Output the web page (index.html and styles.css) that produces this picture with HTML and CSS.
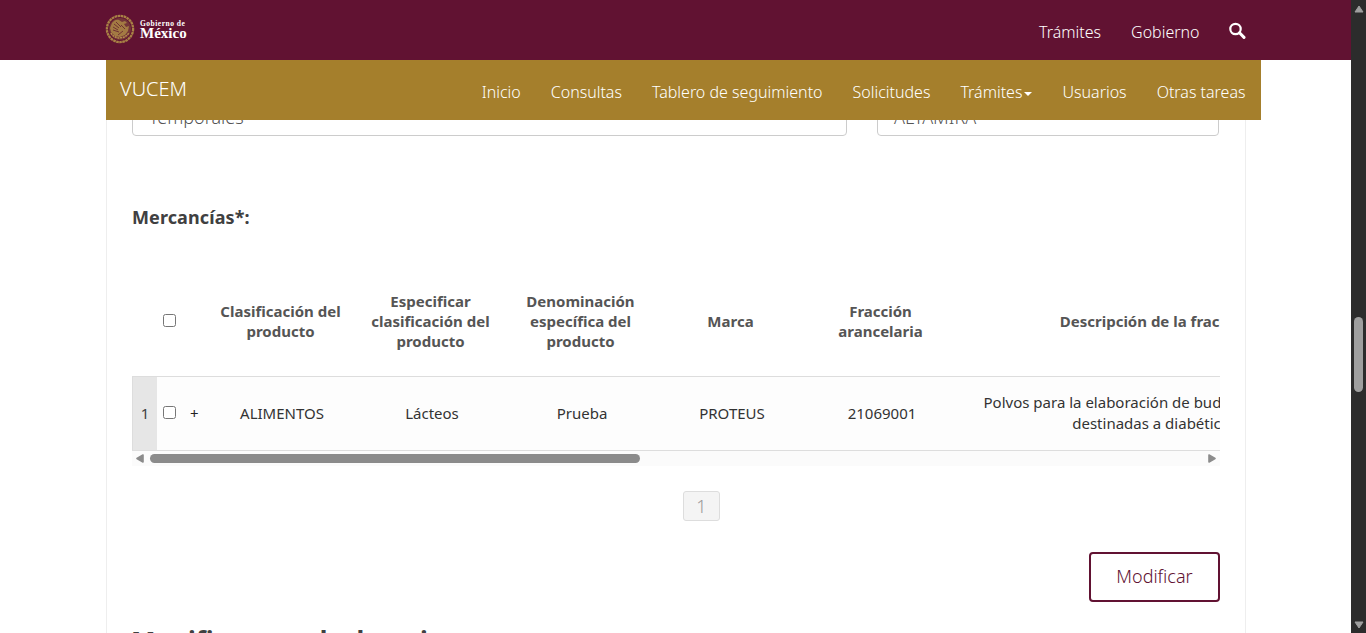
FILE: index.html
```html
<!DOCTYPE html>
<html lang="es">
<head>
<meta charset="utf-8">
<title>VUCEM</title>
<link rel="stylesheet" href="styles.css">
</head>
<body>
<div class="window">
  <div class="page">
    <header class="topbar">
      <a class="brand">
        <svg class="seal" viewBox="0 0 30 30">
          <circle cx="15" cy="15" r="13.1" fill="none" stroke="#a98245" stroke-width="2.3" stroke-dasharray="2.6 .5"/>
          <circle cx="15" cy="15" r="11" fill="#743538"/>
          <path d="M7 9c2-3 5-4 7-3l3 2 3-1 2 2-3 1 2 3 3-1-1 5-3 4-5 2-5-1-4-4-1-4z" fill="#a37a43"/>
          <path d="M9 10l5 4M8 13l5 3M8 16l6 2M11 8l5 5M16 11l4 4M18 17l-5 4" stroke="#65202f" stroke-width=".8" fill="none"/>
          <path d="M6 19c3 6 13 7 18 0" stroke="#b58d4c" stroke-width="1.5" fill="none" stroke-dasharray="2 .7"/>
        </svg>
        <span class="brand-text"><span class="brand-small">Gobierno de</span><span class="brand-big">México</span></span>
      </a>
      <nav class="topnav">
        <a>Trámites</a><a>Gobierno</a>
        <svg class="search" viewBox="0 0 17 18"><circle cx="6.5" cy="7" r="5.2" fill="none" stroke="#fff" stroke-width="2.2"/><path d="M10.5 10.8L15 15.4" stroke="#fff" stroke-width="3" stroke-linecap="round"/></svg>
      </nav>
    </header>
    <div class="subbar">
      <span class="system">VUCEM</span>
      <nav class="subnav"><a>Inicio</a><a>Consultas</a><a>Tablero de seguimiento</a><a>Solicitudes</a><a>Trámites<i class="caret"></i></a><a>Usuarios</a><a>Otras tareas</a></nav>
    </div>
    <main class="content">
      <div class="fields">
        <div class="field field-wide">Temporales</div>
        <div class="field field-port">ALTAMIRA</div>
      </div>
      <h4 class="label">Mercancías*:</h4>
      <div class="grid">
        <div class="grid-head">
          <span class="head-check"><input type="checkbox" class="check"></span>
          <span class="col">Clasificación del producto</span>
          <span class="col">Especificar clasificación del producto</span>
          <span class="col">Denominación específica del producto</span>
          <span class="col">Marca</span>
          <span class="col">Fracción arancelaria</span>
          <span class="col col-desc">Descripción de la fracción arancelaria</span>
        </div>
        <div class="grid-row">
          <span class="num">1</span>
          <span class="row-check"><input type="checkbox" class="check"></span>
          <span class="plus">+</span>
          <span class="col">ALIMENTOS</span>
          <span class="col">Lácteos</span>
          <span class="col">Prueba</span>
          <span class="col">PROTEUS</span>
          <span class="col">21069001</span>
          <span class="col col-desc">Polvos para la elaboración de budines, gelatinas y similares,<br>destinadas a diabéticos, sin azúcar</span>
        </div>
      </div>
      <div class="hscroll">
        <svg class="arrow" viewBox="0 0 8 10"><path d="M7 1v7L1 4.5z" fill="#8b8b8b" stroke="#8b8b8b" stroke-width="1.6" stroke-linejoin="round"/></svg>
        <div class="htrack"><div class="hthumb"></div></div>
        <svg class="arrow" viewBox="0 0 8 10"><path d="M1 1v7l6-3.5z" fill="#8b8b8b" stroke="#8b8b8b" stroke-width="1.6" stroke-linejoin="round"/></svg>
      </div>
      <div class="pager"><span class="page-num">1</span></div>
      <div class="actions"><button class="modify">Modificar</button></div>
      <h3 class="section">Manifiestos y declaraciones</h3>
    </main>
  </div>
  <div class="vscroll">
    <svg class="varrow" viewBox="0 0 10 8"><path d="M5 1l4 6H1z" fill="#9f9f9f" stroke="#9f9f9f" stroke-linejoin="round"/></svg>
    <div class="vtrack"><div class="vthumb"></div></div>
    <svg class="varrow" viewBox="0 0 10 8"><path d="M5 7l4-6H1z" fill="#9f9f9f" stroke="#9f9f9f" stroke-linejoin="round"/></svg>
  </div>
</div>
</body>
</html>
```
FILE: styles.css
```css
* { box-sizing: border-box; }
body { margin: 0; font-family: "Noto Sans", "Open Sans", sans-serif; font-weight: 300; color: #404041; overflow: hidden; }
.window { display: flex; width: 1366px; height: 633px; overflow: hidden; }
.page { width: 1351px; height: 633px; overflow: hidden; background: #fff; }
.topbar { height: 60px; background: #611232; padding: 0 105px 0 105px; display: flex; justify-content: space-between; }
.brand { display: flex; padding-top: 14px; gap: 5px; }
.seal { width: 30px; height: 30px; }
.brand-text { display: flex; flex-direction: column; color: #fff; font-family: "Liberation Serif", serif; font-weight: 700; padding-top: 5px; }
.brand-small { font-size: 7.5px; line-height: 9px; letter-spacing: .5px; }
.brand-big { font-size: 15px; line-height: 11px; }
.topnav { display: flex; gap: 30px; font-size: 16px; line-height: 22px; color: #fff; padding-top: 21px; }
.search { width: 17px; height: 18px; margin: 1px 0 0 -.5px; }
.subbar { margin-left: 106px; width: 1155px; height: 60px; background: #a57f2c; color: #fff; display: flex; justify-content: space-between; padding: 0 15.5px 0 14px; }
.system { font-size: 20px; line-height: 28px; padding-top: 15px; }
.subnav { display: flex; gap: 30px; font-size: 16px; line-height: 22px; padding-top: 21px; white-space: nowrap; }
.caret { display: inline-block; border: 4px solid transparent; border-top-color: #fff; border-bottom: 0; margin-left: 2px; vertical-align: 2px; }
.content { margin-left: 106px; width: 1140px; height: 513px; border: solid #eee; border-width: 0 1px; padding: 0 25px; }
.fields { display: flex; align-items: flex-end; gap: 30px; height: 16px; overflow: hidden; }
.field { flex: none; height: 40px; border: 1px solid #ccc; border-radius: 4px; padding: 0 16px; font-size: 18px; line-height: 40px; color: #555; }
.field-wide { width: 715px; }
.field-port { width: 342px; }
.label { margin: 69px 0 0; font-size: 18px; line-height: 25px; font-weight: 700; letter-spacing: .1px; }
.grid { margin-top: 36px; width: 1088px; overflow: hidden; font-size: 15px; }
.grid-head { display: flex; align-items: center; height: 110px; width: 1400px; font-weight: 700; line-height: 20px; color: #555; }
.col { width: 150px; flex: none; text-align: center; padding: 0 10px; }
.col-desc { width: 500px; white-space: nowrap; }
.grid-head .col-desc { padding-right: 22px; }
.grid-row .col-desc { padding: 0 36px 2px 10px; }
.head-check { width: 73.5px; flex: none; padding: 0 0 2px 31px; display: flex; }
.check { width: 13px; height: 13px; margin: 0; }
.grid-row { display: flex; align-items: center; height: 75px; width: 1600px; border: 1px solid #ddd; background: #fdfdfd; line-height: 21px; font-weight: 400; color: #333; }
.num { width: 24px; align-self: stretch; background: #e6e6e6; line-height: 73px; text-align: center; color: #404041; }
.row-check { width: 30px; display: flex; padding: 0 0 2px 6px; }
.plus { width: 20px; text-align: left; padding-left: 3px; font-size: 15px; color: #222; }
.hscroll { width: 1088px; height: 15px; background: #fbfbfb; display: flex; align-items: center; padding: 0 4px; }
.arrow { width: 8px; height: 10px; }
.htrack { flex: 1; padding-left: 6px; }
.hthumb { width: 490px; height: 9px; border-radius: 5px; background: #8b8b8b; }
.pager { display: flex; margin: 25px 0 0 551px; }
.page-num { width: 37px; height: 30px; border: 1px solid #ddd; border-radius: 3px; background: #f4f4f4; color: #999; font-size: 18px; line-height: 29px; text-align: center; }
.actions { display: flex; justify-content: flex-end; margin-top: 31px; }
.modify { width: 131px; height: 50px; border: 2px solid #611232; border-radius: 4px; background: #fff; color: #611232; font: 300 18px "Noto Sans", sans-serif; padding: 0 0 2px; }
.section { margin: 21px 0 0 -1px; font-size: 26px; line-height: 36px; font-weight: 700; white-space: nowrap; }
.vscroll { width: 15px; height: 633px; background: #2c2c2c; display: flex; flex-direction: column; align-items: center; padding: 5px 0 4px; }
.varrow { width: 10px; height: 8px; flex: none; }
.vtrack { flex: 1; padding-top: 304px; }
.vthumb { width: 9px; height: 75px; border-radius: 5px; background: #9f9f9f; }
```
